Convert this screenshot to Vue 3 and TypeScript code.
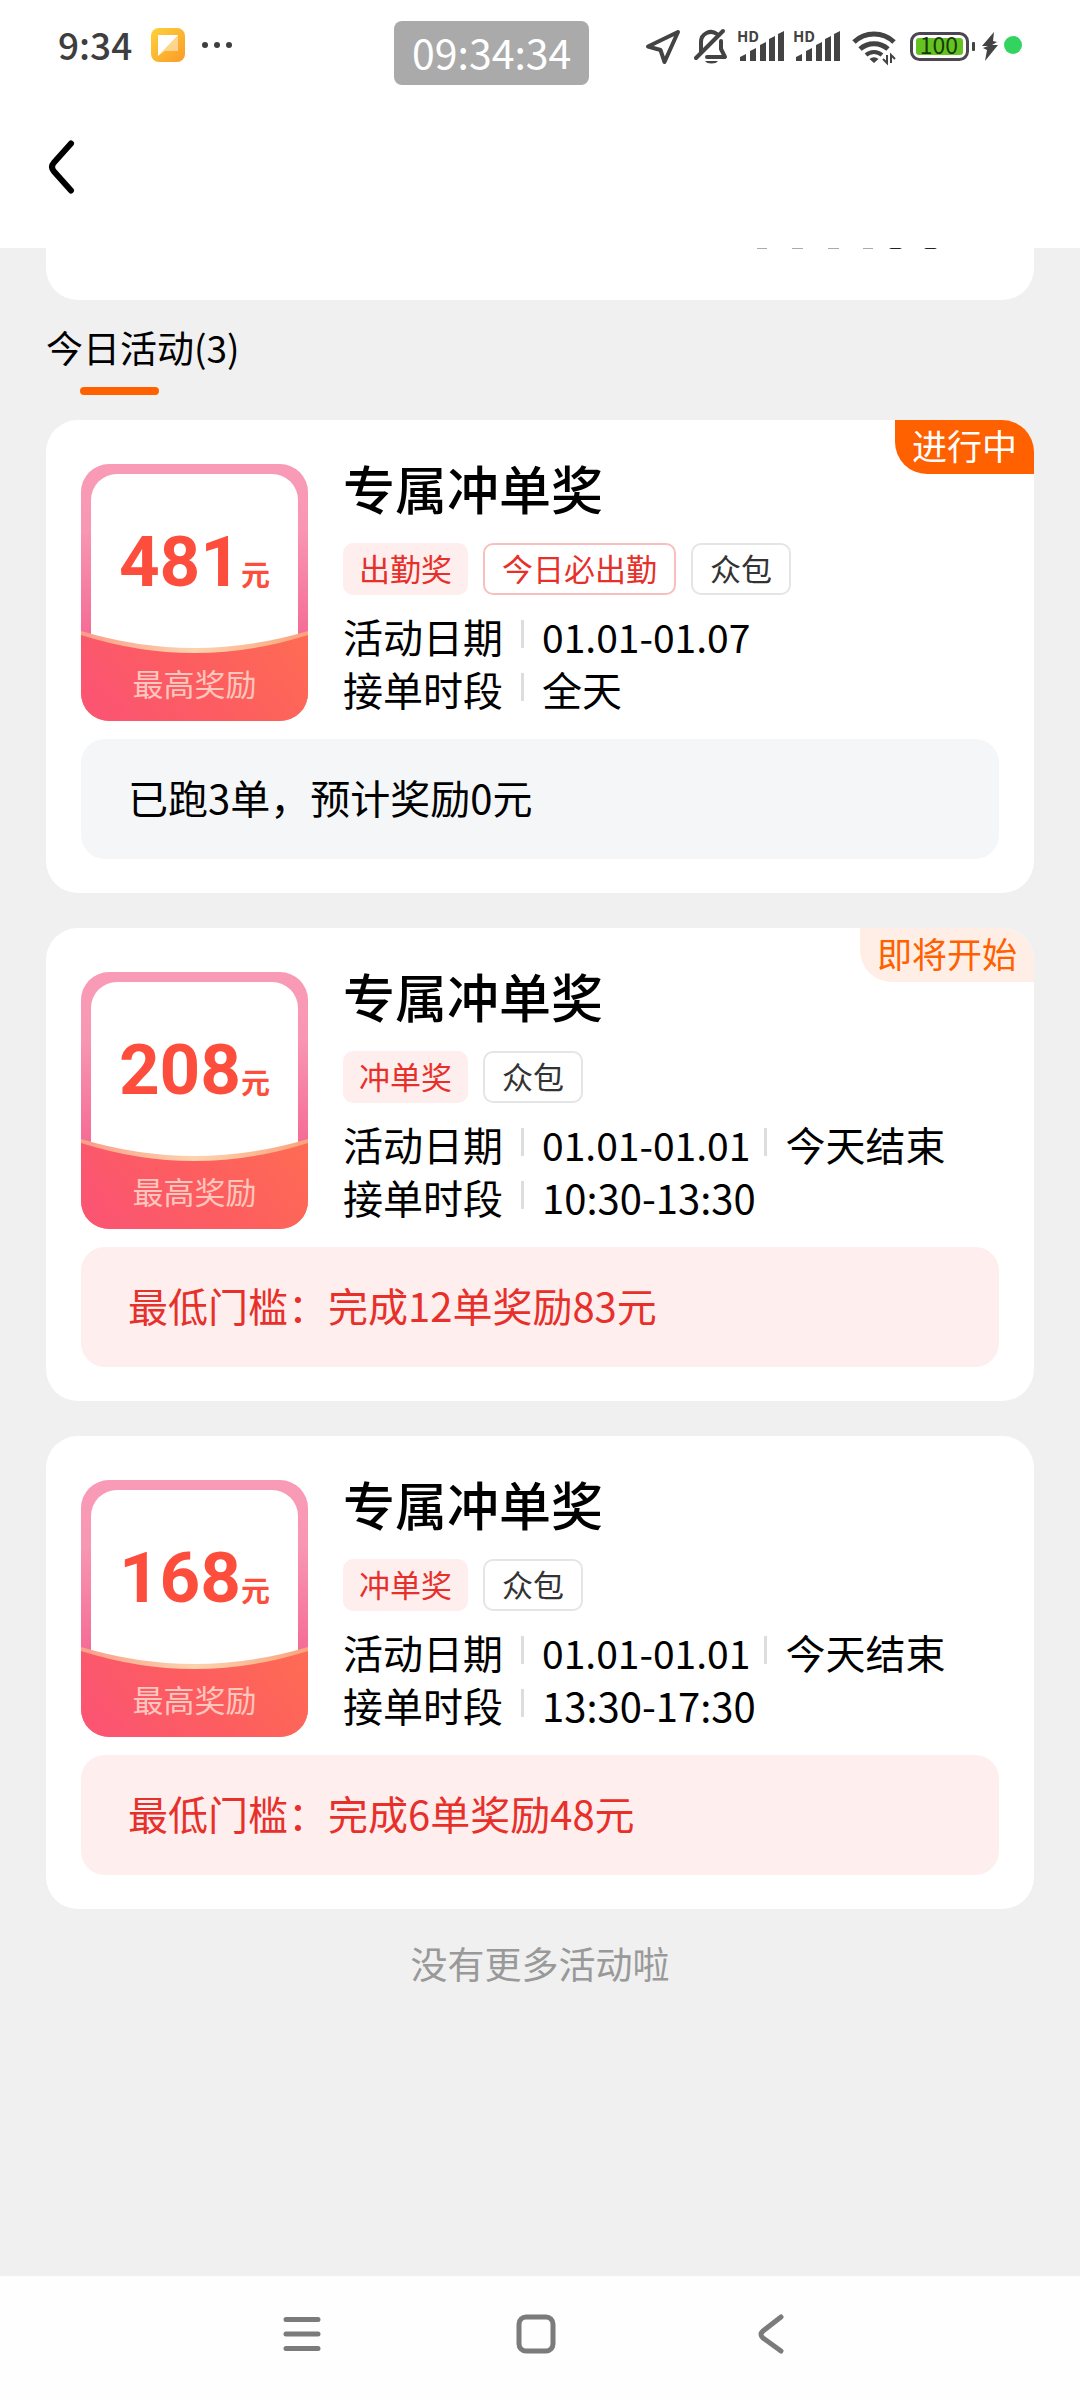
<script setup lang="ts">
interface Tag {
  text: string
  kind: 'solid' | 'outline' | 'plain'
}

interface Row {
  label: string
  kind: 'date' | 'period'
  value: string
  note?: string
}

interface Activity {
  id: number
  amount: number
  title: string
  status?: { text: string; kind: 'active' | 'upcoming' }
  tags: Tag[]
  rows: Row[]
  notice: { text: string; kind: 'neutral' | 'red' }
}

const activities: Activity[] = [
  {
    id: 1,
    amount: 481,
    title: '专属冲单奖',
    status: { text: '进行中', kind: 'active' },
    tags: [
      { text: '出勤奖', kind: 'solid' },
      { text: '今日必出勤', kind: 'outline' },
      { text: '众包', kind: 'plain' },
    ],
    rows: [
      { label: '活动日期', kind: 'date', value: '01.01-01.07' },
      { label: '接单时段', kind: 'period', value: '全天' },
    ],
    notice: { text: '已跑3单，预计奖励0元', kind: 'neutral' },
  },
  {
    id: 2,
    amount: 208,
    title: '专属冲单奖',
    status: { text: '即将开始', kind: 'upcoming' },
    tags: [
      { text: '冲单奖', kind: 'solid' },
      { text: '众包', kind: 'plain' },
    ],
    rows: [
      { label: '活动日期', kind: 'date', value: '01.01-01.01', note: '今天结束' },
      { label: '接单时段', kind: 'period', value: '10:30-13:30' },
    ],
    notice: { text: '最低门槛：完成12单奖励83元', kind: 'red' },
  },
  {
    id: 3,
    amount: 168,
    title: '专属冲单奖',
    tags: [
      { text: '冲单奖', kind: 'solid' },
      { text: '众包', kind: 'plain' },
    ],
    rows: [
      { label: '活动日期', kind: 'date', value: '01.01-01.01', note: '今天结束' },
      { label: '接单时段', kind: 'period', value: '13:30-17:30' },
    ],
    notice: { text: '最低门槛：完成6单奖励48元', kind: 'red' },
  },
]
</script>

<template>
  <div class="page">
    <div class="status-bar">
      <div class="status-left">
        <span class="time">9:34</span>
        <svg class="app-icon" width="34" height="34" viewBox="0 0 34 34" aria-hidden="true">
          <defs>
            <linearGradient id="appFill" x1="0" y1="0" x2="1" y2="1">
              <stop offset="0" stop-color="#fdd23a" />
              <stop offset="1" stop-color="#fb9a28" />
            </linearGradient>
          </defs>
          <rect width="34" height="34" rx="8" fill="url(#appFill)" />
          <path d="M7 7h20v16H14l-7 5z" fill="#fff" fill-opacity=".45" />
          <path d="M7 7h20L7 28z" fill="#fff" />
        </svg>
        <svg width="32" height="8" viewBox="0 0 32 8" fill="#3e3e3e" aria-hidden="true">
          <circle cx="4" cy="4" r="3" />
          <circle cx="16" cy="4" r="3" />
          <circle cx="28" cy="4" r="3" />
        </svg>
      </div>
      <span class="clock">09:34:34</span>
      <svg class="status-icons" width="362" height="44" viewBox="0 0 362 44" aria-hidden="true">
        <g fill="none" stroke="#434343" stroke-width="4" stroke-linejoin="round" stroke-linecap="round">
          <path d="M8 23.500L38 9L24.500 39L20.500 27z" />
          <path d="M61 29V19a10 10 0 0 1 16-8M81 18v8l4 8H67" />
          <path d="M56 35L83 8" />
        </g>
        <path d="M65 38h13a7 4 0 0 1-13 0z" fill="#434343" />
        <g v-for="x in [98, 154]" :key="x" :transform="`translate(${x} 0)`" fill="#434343">
          <text x="-1" y="19" class="hd">HD</text>
          <path d="M2 38v-4l6-3v7zM12 38V28l6-3v13zM22 38V22l6-3v19zM31 38V16l6-3v25zM40 38V11l6-3v30z" />
        </g>
        <g fill="none" stroke="#434343" stroke-width="5">
          <path d="M214 19a29 29 0 0 1 40 0" />
          <path d="M220 26a21 21 0 0 1 28 0" />
          <path d="M226 32a12 12 0 0 1 16 0" stroke-width="4" />
        </g>
        <path d="M229.500 36a7 7 0 0 1 9 0L234 40z" fill="#434343" />
        <path d="M247 32v8l-4-4M251 40v-8l4 4" fill="none" stroke="#434343" stroke-width="2" />
        <rect x="271.500" y="10.500" width="56" height="26" rx="8" fill="#fff" stroke="#4b4650" stroke-width="3" />
        <rect x="276" y="15" width="47" height="17" rx="3" fill="#64c322" />
        <text x="299" y="31" class="level">100</text>
        <rect x="332" y="19" width="3" height="9" rx="1" fill="#434343" />
        <path d="M354 9l-12 14h6l-5 2 4 2-2 11 13-16h-6l5-3-4-1z" fill="#434343" />
      </svg>
      <span class="mic-dot"></span>
    </div>

    <header class="app-header">
      <button class="icon-button" type="button" aria-label="返回">
        <svg width="34" height="56" viewBox="0 0 34 56" aria-hidden="true">
          <path d="M25 4.500L8 23.500q-4 4.500 0 9L25 51.500" fill="none" stroke="#000" stroke-width="6" stroke-linecap="round" />
        </svg>
      </button>
    </header>

    <main class="content">
      <section class="summary">
        <svg width="180" height="2" viewBox="0 0 180 2" aria-hidden="true">
          <path d="M0 0h10v1H0zM35 0h11v1H35zM71 0h11v1H71zM106 0h10v1h-10z" fill="#aaa" />
          <path d="M132 0h13l-2 1h-9zM167 0h13l-2 1h-9z" fill="#222" />
        </svg>
      </section>

      <h2 class="section-title">今日活动(3)</h2>

      <article v-for="item in activities" :key="item.id" class="card">
        <span v-if="item.status" class="status" :class="item.status.kind">{{ item.status.text }}</span>
        <div class="card-top">
          <div class="reward">
            <svg class="reward-art" width="227" height="257" viewBox="0 0 227 257" aria-hidden="true">
              <defs>
                <linearGradient :id="`frame${item.id}`" x1="0" y1="0" x2="0" y2="1">
                  <stop offset="0" stop-color="#f99bb6" />
                  <stop offset=".25" stop-color="#f897b4" />
                  <stop offset=".65" stop-color="#f56d97" />
                </linearGradient>
                <linearGradient :id="`pocket${item.id}`" x1="0" y1=".6" x2="1" y2=".3">
                  <stop offset="0" stop-color="#fb5572" />
                  <stop offset=".5" stop-color="#fd5d60" />
                  <stop offset="1" stop-color="#fe6a55" />
                </linearGradient>
                <linearGradient :id="`edge${item.id}`" x1="0" y1="0" x2="1" y2="0">
                  <stop offset="0" stop-color="#fb9e88" />
                  <stop offset=".5" stop-color="#fbd3ae" />
                  <stop offset="1" stop-color="#fba37c" />
                </linearGradient>
              </defs>
              <rect width="227" height="257" rx="28" :fill="`url(#frame${item.id})`" />
              <path d="M10 36a26 26 0 0 1 26-26h155a26 26 0 0 1 26 26v160H10z" fill="#fff" />
              <path d="M0 167q113.500 34 227 0v62a28 28 0 0 1-28 28H28a28 28 0 0 1-28-28z" :fill="`url(#edge${item.id})`" />
              <path d="M0 171q113.500 36 227 0v58a28 28 0 0 1-28 28H28a28 28 0 0 1-28-28z" :fill="`url(#pocket${item.id})`" />
            </svg>
            <p class="amount"><strong>{{ item.amount }}</strong><span>元</span></p>
            <p class="reward-label">最高奖励</p>
          </div>
          <div class="info">
            <h3 class="title">{{ item.title }}</h3>
            <div class="tags">
              <span v-for="tag in item.tags" :key="tag.text" class="tag" :class="tag.kind">{{ tag.text }}</span>
            </div>
            <p v-for="row in item.rows" :key="row.label" class="row">
              <span>{{ row.label }}</span>
              <i class="divider"></i>
              <span :class="row.kind">{{ row.value }}</span>
              <template v-if="row.note">
                <i class="divider"></i>
                <span>{{ row.note }}</span>
              </template>
            </p>
          </div>
        </div>
        <p class="notice" :class="item.notice.kind">{{ item.notice.text }}</p>
      </article>

      <p class="end">没有更多活动啦</p>
    </main>

    <nav class="system-nav">
      <button class="icon-button" type="button" aria-label="最近任务">
        <svg width="44" height="44" viewBox="0 0 44 44" aria-hidden="true">
          <path d="M6 7.500h32M6 22h32M6 36.500h32" stroke="#7b7b7b" stroke-width="5" stroke-linecap="round" />
        </svg>
      </button>
      <button class="icon-button" type="button" aria-label="主屏幕">
        <svg width="44" height="44" viewBox="0 0 44 44" aria-hidden="true">
          <rect x="5" y="5" width="34" height="34" rx="7" fill="none" stroke="#7b7b7b" stroke-width="5" />
        </svg>
      </button>
      <button class="icon-button" type="button" aria-label="返回上一页">
        <svg width="44" height="44" viewBox="0 0 44 44" aria-hidden="true">
          <path d="M32 5L14 19q-4 3.500 0 7L32 39" fill="none" stroke="#7b7b7b" stroke-width="5" stroke-linecap="round" />
        </svg>
      </button>
    </nav>
  </div>
</template>

<style>
body {
  margin: 0;
  background: #f0f0f0;
}
</style>

<style scoped>
.page {
  display: flex;
  flex-direction: column;
  min-height: 100vh;
  background: #f0f0f0;
  color: #000;
  font-family: "Noto Sans CJK SC", "Noto Sans", sans-serif;
}

h2,
h3,
p {
  margin: 0;
  font-weight: 400;
}

.status-bar {
  position: relative;
  display: flex;
  align-items: center;
  height: 90px;
  padding: 0 58px;
  background: #fff;
}

.status-left {
  display: flex;
  flex: 1;
  align-items: center;
}

.time {
  padding-bottom: 2px;
  color: #3e3e3e;
  font-size: 37px;
  font-weight: 500;
  line-height: 48px;
}

.app-icon {
  margin: 0 16px 0 19px;
}

.clock {
  position: absolute;
  top: 21px;
  left: 394px;
  padding: 0 18px 4px;
  border-radius: 8px;
  background: #aaa;
  color: #fff;
  font-size: 41px;
  line-height: 60px;
}

.status-icons {
  flex: none;
}

.hd {
  font-size: 15px;
  font-weight: 700;
}

.level {
  fill: #173a08;
  font-size: 23px;
  text-anchor: middle;
}

.mic-dot {
  flex: none;
  width: 18px;
  height: 18px;
  margin-left: 2px;
  border-radius: 50%;
  background: #33d35f;
}

.app-header {
  display: flex;
  align-items: flex-start;
  height: 109px;
  padding: 49px 46px 0;
  background: #fff;
}

.icon-button {
  display: flex;
  align-items: center;
  justify-content: center;
  padding: 0;
  border: 0;
  background: none;
}

.content {
  flex: 1;
  padding: 0 46px;
}

.summary {
  display: flex;
  align-items: flex-start;
  justify-content: flex-end;
  height: 52px;
  padding-right: 97px;
  border-radius: 0 0 32px 32px;
  background: #fff;
}

.section-title {
  margin: 20px 0 25px;
  font-size: 37px;
  line-height: 54px;
}

.section-title::after {
  display: block;
  width: 79px;
  height: 8px;
  margin: 13px 0 0 34px;
  border-radius: 4px;
  background: #ff6000;
  content: "";
}

.card {
  position: relative;
  margin-bottom: 35px;
  padding: 44px 35px 34px;
  border-radius: 32px;
  background: #fff;
}

.status {
  position: absolute;
  top: 0;
  right: 0;
  padding: 0 17px 4px;
  border-radius: 0 32px 0 32px;
  font-size: 35px;
  line-height: 50px;
}

.active {
  background: #ff6000;
  color: #fff;
}

.upcoming {
  background: #ffeee5;
  color: #ff6000;
}

.card-top {
  display: flex;
  gap: 35px;
}

.reward {
  position: relative;
  flex: none;
  width: 227px;
  height: 257px;
  text-align: center;
}

.reward-art {
  position: absolute;
  inset: 0;
}

.amount,
.reward-label {
  position: relative;
}

.amount {
  display: flex;
  align-items: baseline;
  justify-content: center;
  padding-top: 48px;
  color: #fd4e3d;
  line-height: 100px;
}

.amount strong {
  font-family: Roboto, "Noto Sans", sans-serif;
  font-size: 71px;
  font-weight: 700;
}

.amount span {
  font-size: 29px;
  font-weight: 700;
}

.reward-label {
  padding-top: 37px;
  color: #ffc6bd;
  font-size: 31px;
  line-height: 46px;
}

.info {
  flex: 1;
  min-width: 0;
}

.title {
  font-size: 52px;
  font-weight: 500;
  line-height: 48px;
}

.tags {
  display: flex;
  gap: 15px;
  margin: 31px 0 15px;
}

.tag {
  box-sizing: border-box;
  height: 52px;
  padding: 0 16px;
  border-radius: 10px;
  font-size: 31px;
  line-height: 50px;
}

.outline,
.plain {
  padding: 0 17px;
  border: 2px solid #f9bfbf;
  line-height: 46px;
}

.solid,
.outline {
  color: #e8302b;
}

.solid {
  background: #feeeee;
}

.plain {
  border-color: #e5e5e5;
  color: #333;
}

.row {
  display: flex;
  font-size: 40px;
  line-height: 53px;
}

.date {
  font-size: 39px;
}

.divider {
  width: 3px;
  height: 28px;
  margin: 10px 18px 0;
  background: #ddd;
}

.divider ~ .divider {
  margin-left: 14px;
}

.notice {
  margin-top: 18px;
  padding: 0 47px 4px;
  border-radius: 24px;
  font-size: 40px;
  line-height: 116px;
}

.neutral {
  background: #f5f6f8;
}

.red {
  background: #feeeee;
  color: #e8302b;
}

.end {
  color: #999;
  font-size: 37px;
  line-height: 38px;
  text-align: center;
}

.system-nav {
  box-sizing: border-box;
  display: flex;
  height: 124px;
  padding: 0 192px 8px 185px;
  background: #fefefe;
}

.system-nav .icon-button {
  flex: 1;
}
</style>
